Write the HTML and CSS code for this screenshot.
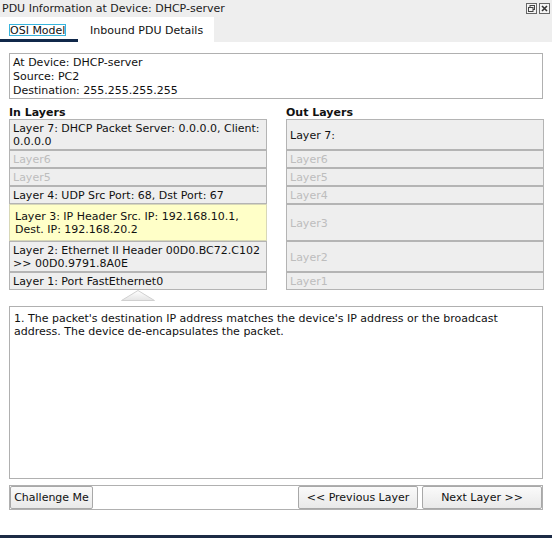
FILE: index.html
```html
<!DOCTYPE html>
<html>
<head>
<meta charset="utf-8">
<link rel="stylesheet" href="styles.css">
</head>
<body>
<div class="window">
  <div class="titlebar">
    <span class="title">PDU Information at Device: DHCP-server</span>
    <span class="winbtns">
      <svg class="wicon" width="11" height="11" viewBox="0 0 11 11"><rect x="0.5" y="0.5" width="10" height="10" fill="#f4f4f4" stroke="#666"/><rect x="4" y="2.5" width="4.5" height="4" fill="none" stroke="#444"/><rect x="2.5" y="4.5" width="4.5" height="4" fill="#f4f4f4" stroke="#444"/></svg>
      <svg class="wicon" width="11" height="11" viewBox="0 0 11 11"><rect x="0.5" y="0.5" width="10" height="10" fill="#f4f4f4" stroke="#666"/><path d="M3 3 L8 8 M8 3 L3 8" stroke="#333" stroke-width="1.6"/></svg>
    </span>
  </div>
  <div class="tabs">
    <div class="tab tab-active"><span class="focus">OSI Model</span></div>
    <div class="tab tab-second">Inbound PDU Details</div>
  </div>
  <div class="info">
    <div>At Device: DHCP-server</div>
    <div>Source: PC2</div>
    <div>Destination: 255.255.255.255</div>
  </div>
  <div class="layers">
    <div class="head">In Layers</div>
    <div class="head">Out Layers</div>

    <div class="cell">Layer 7: DHCP Packet Server: 0.0.0.0, Client: 0.0.0.0</div>
    <div class="cell out">Layer 7:</div>

    <div class="cell off">Layer6</div>
    <div class="cell out off">Layer6</div>

    <div class="cell off">Layer5</div>
    <div class="cell out off">Layer5</div>

    <div class="cell">Layer 4: UDP Src Port: 68, Dst Port: 67</div>
    <div class="cell out off">Layer4</div>

    <div class="cell current">Layer 3: IP Header Src. IP: 192.168.10.1, Dest. IP: 192.168.20.2</div>
    <div class="cell out off">Layer3</div>

    <div class="cell">Layer 2: Ethernet II Header 00D0.BC72.C102 &gt;&gt; 00D0.9791.8A0E</div>
    <div class="cell out off">Layer2</div>

    <div class="cell">Layer 1: Port FastEthernet0</div>
    <div class="cell out off">Layer1</div>

    <div class="arrow">
      <svg width="34" height="11" viewBox="0 0 34 11"><defs><linearGradient id="g" x1="0" y1="0" x2="0" y2="1"><stop offset="0" stop-color="#ffffff"/><stop offset="1" stop-color="#e4e4e4"/></linearGradient></defs><polygon points="0.5,10.5 17,0.5 33.5,10.5" fill="url(#g)" stroke="#d0d0d0"/></svg>
    </div>
  </div>
  <div class="desc">1. The packet's destination IP address matches the device's IP address or the broadcast address. The device de-encapsulates the packet.</div>
  <div class="bar">
    <button class="btn btn-challenge">Challenge Me</button>
    <span class="spacer"></span>
    <button class="btn btn-nav">&lt;&lt; Previous Layer</button>
    <button class="btn btn-nav">Next Layer &gt;&gt;</button>
  </div>
  <div class="footer"></div>
</div>
</body>
</html>
```

FILE: styles.css
```css
* { box-sizing: border-box; }
html, body { margin: 0; padding: 0; }
body {
  width: 552px;
  height: 538px;
  background: #ffffff;
  font-family: "DejaVu Sans", "Liberation Sans", sans-serif;
  font-size: 11px;
  color: #111;
  overflow: hidden;
}
.window {
  display: flex;
  flex-direction: column;
  height: 538px;
}
.titlebar {
  height: 17px;
  background: #eeeeee;
  display: flex;
  justify-content: space-between;
  align-items: center;
  padding: 1px 2px 0 2px;
  line-height: 16px;
}
.title { color: #222; }
.winbtns { display: flex; gap: 2px; align-items: center; margin-top: -2px; }
.wicon { display: block; }
.tabs {
  height: 25px;
  background: #eeeeee;
  display: flex;
}
.tab {
  background: #ffffff;
  height: 25px;
  padding-top: 7px;
  color: #111;
}
.tab-active {
  width: 78px;
  padding-left: 9px;
  border-bottom: 3px solid #10284a;
}
.focus {
  border: 1px solid #38b4dc;
  display: inline-block;
  height: 12px;
  line-height: 11px;
}
.tab-second {
  width: 136px;
  padding-left: 12px;
  padding-top: 8px;
  line-height: 12px;
}
.info {
  margin: 11px 9px 0 9px;
  border: 1px solid #b0b0b0;
  height: 46px;
  padding: 2px 3px 0 3px;
  line-height: 14px;
}
.layers {
  display: grid;
  grid-template-columns: 258px 258px;
  column-gap: 19px;
  margin: 7px 9px 0 9px;
}
.head {
  font-weight: bold;
  line-height: 13px;
}
.cell {
  border: 1px solid #b4b4b4;
  background: #eeeeee;
  padding: 2px 3px 1px 3px;
  line-height: 13px;
  color: #111;
}
.cell.out {
  display: flex;
  align-items: center;
}
.cell.off { color: #bdbdbd; }
.cell.current {
  background: #ffffc8;
  border-color: #d8d8b8;
  padding: 5px 5px 4px 5px;
}
.arrow {
  grid-column: 1;
  display: flex;
  justify-content: center;
  height: 16px;
}
.arrow svg { display: block; }
.desc {
  margin: 0 9px 0 9px;
  border: 1px solid #b0b0b0;
  height: 173px;
  padding: 5px 4px 0 4px;
  line-height: 13px;
}
.bar {
  margin: 6px 9px 0 9px;
  border: 1px solid #b0b0b0;
  height: 25px;
  display: flex;
  align-items: stretch;
  gap: 4px;
}
.spacer { flex: 1; }
.btn {
  font-family: "DejaVu Sans", "Liberation Sans", sans-serif;
  font-size: 11px;
  color: #111;
  background: linear-gradient(#fafafa, #e9e9e9);
  border: 1px solid #a8a8a8;
  border-radius: 2px;
  padding: 0;
  margin: 0;
  height: 23px;
}
.btn-challenge { width: 83px; }
.btn-nav { width: 120px; }
.footer {
  margin-top: auto;
  height: 3px;
  background: #1c2b45;
}
```
